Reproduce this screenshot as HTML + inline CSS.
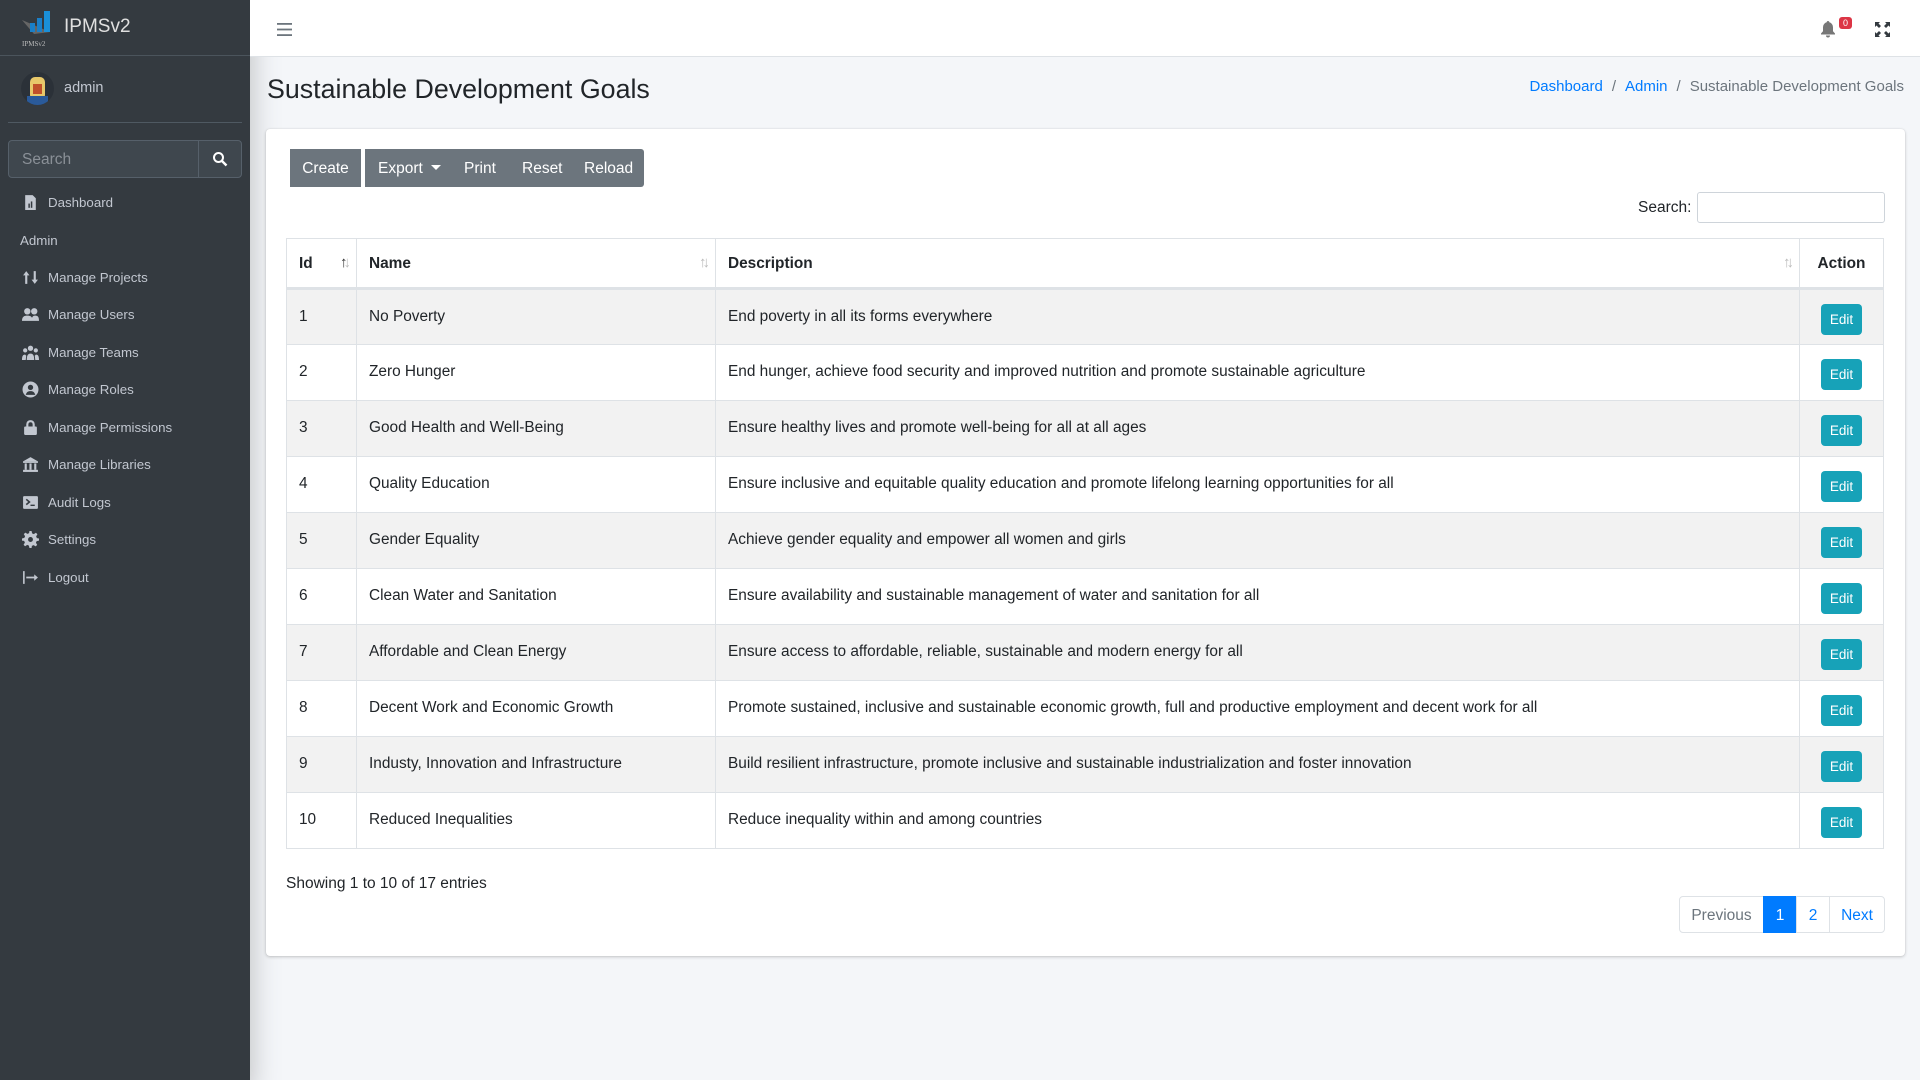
<!DOCTYPE html>
<html><head><meta charset="utf-8"><style>
*{box-sizing:border-box;margin:0;padding:0}
body{width:1920px;height:1080px;overflow:hidden;background:#f4f6f9;font-family:"Liberation Sans",sans-serif;color:#212529;position:relative}
.sb{position:absolute;left:0;top:0;width:250px;height:1080px;background:#343a40;box-shadow:0 14px 28px rgba(0,0,0,.25)}
.brand{height:56px;border-bottom:1px solid #4b545c;position:relative}
.brand .t{position:absolute;left:64px;top:16px;color:#e0e0e0;font-size:19px;font-weight:300}
.user{position:absolute;left:8px;top:57px;width:234px;height:66px;border-bottom:1px solid #4f5962}
.user .nm{position:absolute;left:56px;top:23px;color:#c2c7d0;font-size:14.5px}
.av{position:absolute;left:13px;top:15px;width:33px;height:33px;border-radius:50%;background:#2b3138;overflow:hidden}
.srch{position:absolute;left:8px;top:140px;width:234px;height:38px;border:1px solid #56606a;border-radius:4px;background:#3f474e}
.srch span{position:absolute;left:13px;top:10px;color:#8a9097;font-size:15.5px}
.srch .b{position:absolute;right:0;top:0;width:43px;height:36px;border-left:1px solid #56606a}
.mi{position:absolute;left:22px;color:#c2c7d0;font-size:13.3px;display:flex;align-items:center}
.mi svg{width:17px;height:17px;margin-right:9px;fill:#c2c7d0}
.hdr{position:absolute;left:250px;top:0;width:1670px;height:57px;background:#fff;border-bottom:1px solid #dee2e6}
h1{position:absolute;left:267px;top:74px;font-size:26.8px;font-weight:400;color:#212529}
.bc{position:absolute;right:16px;top:78px;font-size:15px;color:#6c757d}
.bc a{color:#007bff;text-decoration:none}
.bc i{font-style:normal;padding:0 9px;color:#6c757d}
.card{position:absolute;left:266px;top:129px;width:1639px;height:827px;background:#fff;border-radius:4px;box-shadow:0 0 1px rgba(0,0,0,.125),0 1px 3px rgba(0,0,0,.2)}
.btn{position:absolute;top:149px;height:38px;background:#6c757d;color:#fff;font-size:15.5px;line-height:40px}
.tbl{position:absolute;left:286px;top:238px;width:1598px;border-collapse:collapse;font-size:15.4px;table-layout:fixed}
.tbl td,.tbl th{border:1px solid #dee2e6;padding:0 12px;text-align:left;vertical-align:top}
.tbl th{height:50px;vertical-align:middle;border-bottom:3px solid #dee2e6;font-weight:700;position:relative;padding-top:2px}
.tbl td{height:56px;padding-top:18px}
.tbl tr:nth-child(even) td{background:#f2f2f2}
.ed{display:inline-block;background:#17a2b8;color:#fff;font-size:13.5px;width:41px;height:31px;line-height:31px;text-align:center;border-radius:4px;margin-top:-4px}
.ar{position:absolute;right:9px;top:15px;color:#bbb;font-size:15px;letter-spacing:-4px;font-weight:700}
.pg{position:absolute;top:896px;height:37px;border:1px solid #dee2e6;line-height:37px;text-align:center;font-size:15.5px;color:#007bff;background:#fff}
</style></head><body>
<div class="sb">
 <div class="brand">
  <svg style="position:absolute;left:20px;top:8px" width="36" height="40" viewBox="0 0 36 40"><path d="M2 12 L30 24 L14 26 Z" fill="#666"/><rect x="10" y="15" width="5" height="9" fill="#1a7fc8"/><rect x="17" y="10" width="5" height="14" fill="#1a7fc8"/><rect x="24" y="3" width="6" height="21" fill="#1a8fd8"/><text x="2" y="38" font-family="Liberation Serif" font-size="7" fill="#bbb">IPMSv2</text></svg>
  <span class="t">IPMSv2</span>
 </div>
 <div class="user"><div class="av"><div style="position:absolute;left:9px;top:5px;width:15px;height:20px;background:#e8c86a;border-radius:5px 5px 2px 2px"></div><div style="position:absolute;left:12px;top:12px;width:9px;height:10px;background:#c0502a"></div><div style="position:absolute;left:6px;top:24px;width:21px;height:9px;background:#2a5a9a"></div></div><span class="nm">admin</span></div>
 <div class="srch"><span>Search</span><div class="b"><svg style="position:absolute;left:13px;top:10px" width="16" height="16" viewBox="0 0 16 16"><circle cx="6.5" cy="6.5" r="4.5" stroke="#fff" stroke-width="2" fill="none"/><path d="M10 10 L14.5 14.5" stroke="#fff" stroke-width="2.4"/></svg></div></div>
 <div class="mi" style="top:194px"><svg viewBox="0 0 16 16"><path d="M3 1h7l3 3v11H3z"/><rect x="6" y="9" width="1.4" height="4" fill="#343a40"/><rect x="8.3" y="7" width="1.4" height="6" fill="#343a40"/></svg>Dashboard</div>
 <div class="mi" style="top:233px;left:20px">Admin</div>
 <div class="mi" style="top:269px"><svg viewBox="0 0 16 16"><path d="M4 2l3 4H5v8H3V6H1zM12 14l-3-4h2V2h2v8h2z"/></svg>Manage Projects</div>
 <div class="mi" style="top:306px"><svg viewBox="0 0 16 16"><circle cx="5" cy="5" r="3"/><circle cx="11.5" cy="5" r="3"/><path d="M0 14c0-4 2-5 5-5s5 1 5 5zM9 14c0-3 1-5 3-5 3 0 4 1 4 5z"/></svg>Manage Users</div>
 <div class="mi" style="top:344px"><svg viewBox="0 0 16 16"><circle cx="8" cy="4" r="2.5"/><circle cx="3" cy="6" r="2"/><circle cx="13" cy="6" r="2"/><path d="M4.5 15c0-5 1.5-6 3.5-6s3.5 1 3.5 6zM0 15c0-4 1-5 3-5l1 1-.5 4zM16 15c0-4-1-5-3-5l-1 1 .5 4z"/></svg>Manage Teams</div>
 <div class="mi" style="top:381px"><svg viewBox="0 0 16 16"><circle cx="8" cy="8" r="7.5"/><circle cx="8" cy="6" r="2.5" fill="#343a40"/><path d="M3.5 13c1-3 2.5-3.5 4.5-3.5s3.5.5 4.5 3.5z" fill="#343a40"/></svg>Manage Roles</div>
 <div class="mi" style="top:419px"><svg viewBox="0 0 16 16"><path d="M4 7V5a4 4 0 018 0v2h-2V5a2 2 0 00-4 0v2z"/><rect x="2" y="7" width="12" height="8" rx="1"/></svg>Manage Permissions</div>
 <div class="mi" style="top:456px"><svg viewBox="0 0 16 16"><path d="M8 1l7 4H1z"/><rect x="1" y="5" width="14" height="1.5"/><rect x="2.5" y="7" width="2" height="6"/><rect x="7" y="7" width="2" height="6"/><rect x="11.5" y="7" width="2" height="6"/><rect x="1" y="13" width="14" height="2"/></svg>Manage Libraries</div>
 <div class="mi" style="top:494px"><svg viewBox="0 0 16 16"><rect x="1" y="2" width="14" height="12" rx="1"/><path d="M4 5l3 2.5-3 2.5" stroke="#343a40" stroke-width="1.5" fill="none"/><rect x="8" y="10" width="4" height="1.3" fill="#343a40"/></svg>Audit Logs</div>
 <div class="mi" style="top:531px"><svg viewBox="0 0 16 16"><path d="M7 0h2l.5 2.2 1.6.7 2-1.2 1.4 1.4-1.2 2 .7 1.6L16 7v2l-2.2.5-.7 1.6 1.2 2-1.4 1.4-2-1.2-1.6.7L9 16H7l-.5-2.2-1.6-.7-2 1.2-1.4-1.4 1.2-2-.7-1.6L0 9V7l2.2-.5.7-1.6-1.2-2 1.4-1.4 2 1.2 1.6-.7z"/><circle cx="8" cy="8" r="2.3" fill="#343a40"/></svg>Settings</div>
 <div class="mi" style="top:569px"><svg viewBox="0 0 16 16"><rect x="1" y="2" width="1.5" height="12"/><path d="M4 7.2h7.5V5l3.5 3-3.5 3V8.8H4z"/></svg>Logout</div>
</div>
<div class="hdr">
 <svg style="position:absolute;left:27px;top:23px" width="15" height="13" viewBox="0 0 15 13"><rect y="0" width="15" height="1.8" fill="#6c757d"/><rect y="5.6" width="15" height="1.8" fill="#6c757d"/><rect y="11.2" width="15" height="1.8" fill="#6c757d"/></svg>
 <svg style="position:absolute;left:1570px;top:21px" width="16" height="17" viewBox="0 0 16 17"><path d="M8 0a1.3 1.3 0 011.3 1.3 5 5 0 013.7 4.9v4l2 2.3v1H1v-1l2-2.3v-4A5 5 0 016.7 1.3 1.3 1.3 0 018 0zM6 14.5h4a2 2 0 01-4 0z" fill="#777"/></svg>
 <div style="position:absolute;left:1589px;top:17px;width:13px;height:12px;background:#dc3545;border-radius:3px;color:#fff;font-size:9px;text-align:center;line-height:12px">0</div>
 <svg style="position:absolute;left:1625px;top:22px" width="15" height="15" viewBox="0 0 15 15" fill="#343a40"><path d="M0 0h5L3.5 1.5 6 4 4 6 1.5 3.5 0 5zM15 0v5l-1.5-1.5L11 6 9 4l2.5-2.5L10 0zM0 15v-5l1.5 1.5L4 9l2 2-2.5 2.5L5 15zM15 15h-5l1.5-1.5L9 11l2-2 2.5 2.5L15 10z"/></svg>
</div>
<h1>Sustainable Development Goals</h1>
<div class="bc"><a>Dashboard</a><i>/</i><a>Admin</a><i>/</i>Sustainable Development Goals</div>
<div class="card"></div>
<div class="btn" style="left:290px;width:71px;text-align:center">Create</div>
<div class="btn" style="left:365px;width:279px;border-radius:0 3px 3px 0"><span style="position:absolute;left:13px">Export <span style="display:inline-block;border-left:5px solid transparent;border-right:5px solid transparent;border-top:5px solid #fff;vertical-align:3px;margin-left:4px"></span></span><span style="position:absolute;left:99px">Print</span><span style="position:absolute;left:157px">Reset</span><span style="position:absolute;left:219px">Reload</span></div>
<div style="position:absolute;left:1638px;top:199px;font-size:15.5px">Search:</div>
<div style="position:absolute;left:1697px;top:192px;width:188px;height:31px;border:1px solid #ced4da;border-radius:3px;background:#fff"></div>
<table class="tbl">
<colgroup><col style="width:70px"><col style="width:359px"><col style="width:1084px"><col></colgroup>
<tr><th>Id<span class="ar" style="color:#333">↑<span style="color:#bbb">↓</span></span></th><th>Name<span class="ar">↑↓</span></th><th>Description<span class="ar">↑↓</span></th><th style="text-align:center">Action</th></tr>
<tr><td>1</td><td>No Poverty</td><td>End poverty in all its forms everywhere</td><td style="text-align:center"><span class="ed">Edit</span></td></tr>
<tr><td>2</td><td>Zero Hunger</td><td>End hunger, achieve food security and improved nutrition and promote sustainable agriculture</td><td style="text-align:center"><span class="ed">Edit</span></td></tr>
<tr><td>3</td><td>Good Health and Well-Being</td><td>Ensure healthy lives and promote well-being for all at all ages</td><td style="text-align:center"><span class="ed">Edit</span></td></tr>
<tr><td>4</td><td>Quality Education</td><td>Ensure inclusive and equitable quality education and promote lifelong learning opportunities for all</td><td style="text-align:center"><span class="ed">Edit</span></td></tr>
<tr><td>5</td><td>Gender Equality</td><td>Achieve gender equality and empower all women and girls</td><td style="text-align:center"><span class="ed">Edit</span></td></tr>
<tr><td>6</td><td>Clean Water and Sanitation</td><td>Ensure availability and sustainable management of water and sanitation for all</td><td style="text-align:center"><span class="ed">Edit</span></td></tr>
<tr><td>7</td><td>Affordable and Clean Energy</td><td>Ensure access to affordable, reliable, sustainable and modern energy for all</td><td style="text-align:center"><span class="ed">Edit</span></td></tr>
<tr><td>8</td><td>Decent Work and Economic Growth</td><td>Promote sustained, inclusive and sustainable economic growth, full and productive employment and decent work for all</td><td style="text-align:center"><span class="ed">Edit</span></td></tr>
<tr><td>9</td><td>Industy, Innovation and Infrastructure</td><td>Build resilient infrastructure, promote inclusive and sustainable industrialization and foster innovation</td><td style="text-align:center"><span class="ed">Edit</span></td></tr>
<tr><td>10</td><td>Reduced Inequalities</td><td>Reduce inequality within and among countries</td><td style="text-align:center"><span class="ed">Edit</span></td></tr>
</table>
<div style="position:absolute;left:286px;top:875px;font-size:15.5px">Showing 1 to 10 of 17 entries</div>
<div class="pg" style="left:1679px;width:85px;color:#6c757d;border-radius:4px 0 0 4px">Previous</div>
<div class="pg" style="left:1763px;width:34px;background:#007bff;border-color:#007bff;color:#fff">1</div>
<div class="pg" style="left:1796px;width:34px">2</div>
<div class="pg" style="left:1829px;width:56px;border-radius:0 4px 4px 0">Next</div>
</body></html>
